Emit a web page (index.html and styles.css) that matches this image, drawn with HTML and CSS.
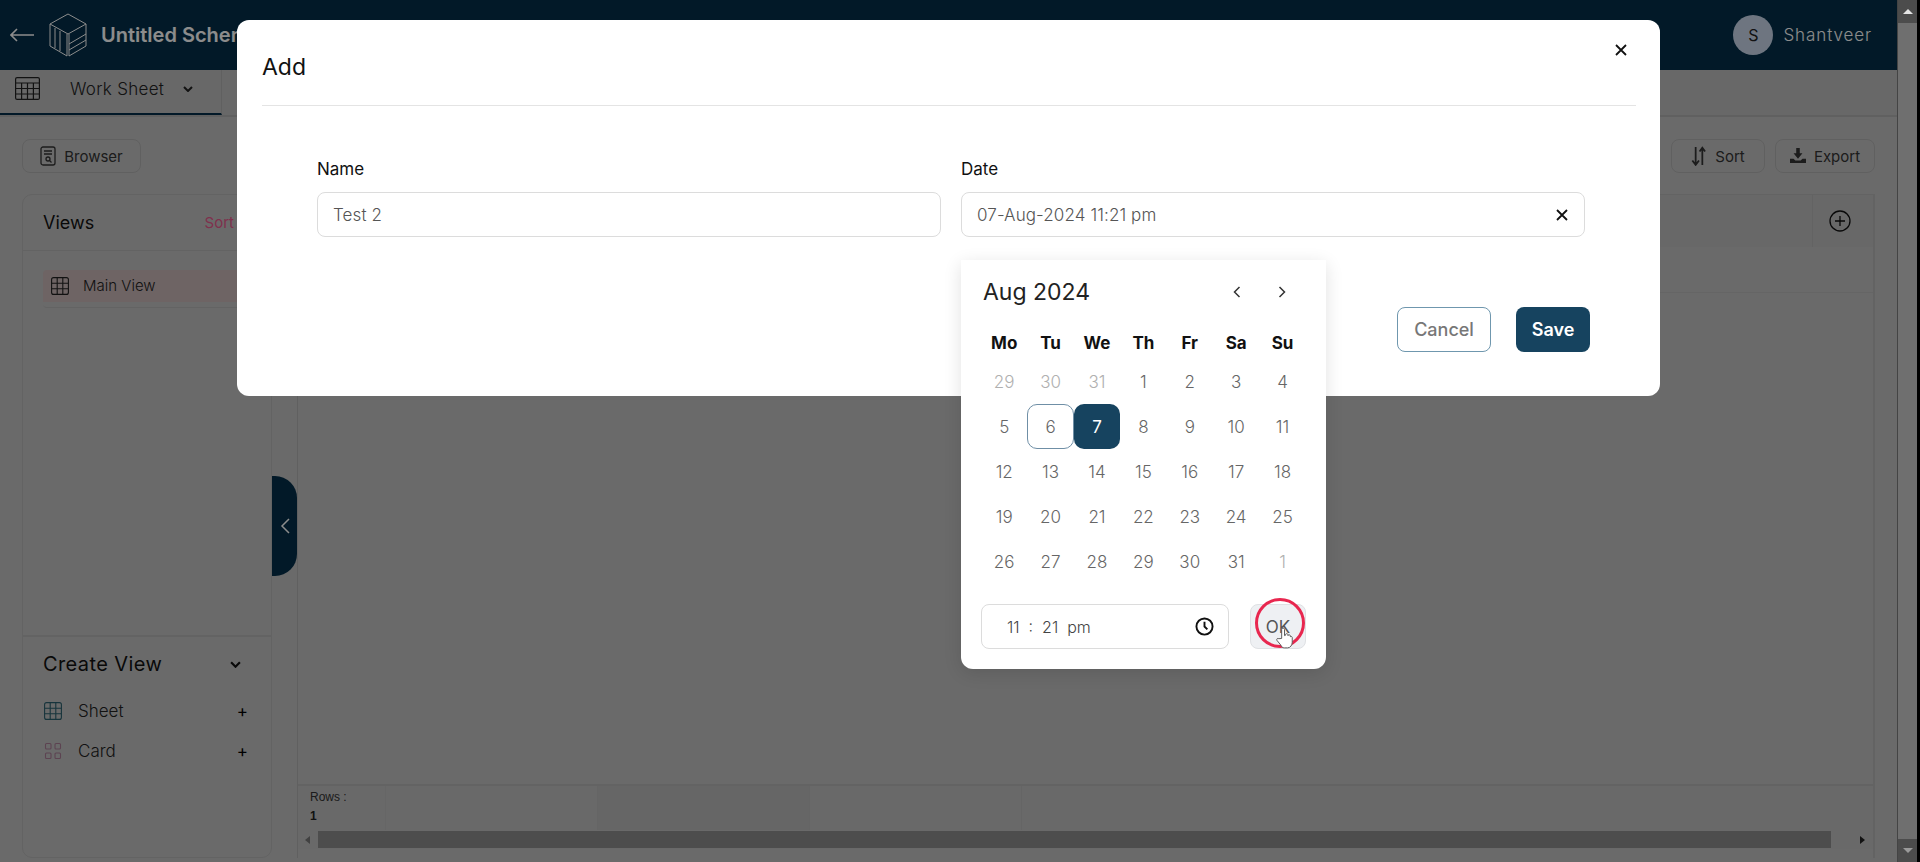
FILE: index.html
```html
<!DOCTYPE html>
<html lang="en">
<head>
  <meta charset="UTF-8">
  <title>Untitled Schema</title>
  <link rel="stylesheet" href="styles.css">
</head>
<body>
  <div class="frame">
    <header class="topbar">
      <svg class="back-icon" viewBox="0 0 24 14" fill="none" stroke="currentColor" stroke-width="1.6"><path d="M24 7H1M7 1 1 7l6 6"/></svg>
      <svg class="logo" viewBox="0 0 40 44" fill="none" stroke="currentColor" stroke-width="1"><path d="M20 1 38 11 20 21 2 11Z"/><path d="M2 11V33L19 43V21"/><path d="M38 11V33L21 43V21"/><path d="M7 15V35M12 18V38M21 31 38 21M21 37 38 27"/></svg>
      <span class="app-title">Untitled Schema</span>
      <div class="user">
        <span class="avatar">S</span>
        <span class="user-name">Shantveer</span>
      </div>
    </header>

    <nav class="tabs">
      <div class="tab active">
        <svg class="tab-icon" viewBox="0 0 25 23" fill="none" stroke="currentColor" stroke-width="1.2"><rect x=".6" y=".6" width="23.8" height="21.8" rx="1.5"/><path d="M.6 6h23.8M.6 11.5h23.8M.6 17h23.8M6.6 6v16.4M12.5 6v16.4M18.4 6v16.4"/></svg>
        <span>Work Sheet</span>
        <svg class="chevron" viewBox="0 0 10 6" fill="none" stroke="currentColor" stroke-width="2"><path d="m1 1 4 4 4-4"/></svg>
      </div>
    </nav>

    <main class="workspace">
      <div class="toolbar">
        <button class="tool-btn browser">
          <svg viewBox="0 0 16 20" fill="none" stroke="currentColor" stroke-width="1.3"><rect x="1" y="1" width="14" height="18" rx="2"/><path d="M4 5h8M4 8h8"/><circle cx="8" cy="13" r="2"/><path d="m9.5 14.5 2 2"/></svg>
          Browser
        </button>
        <div class="tool-group">
          <button class="tool-btn sort">
            <svg viewBox="0 0 14 18" fill="none" stroke="currentColor" stroke-width="1.6"><path d="M4 1v15M1 13l3 4 3-4M10 17V2M7.500 5 10 1.500 12.500 5"/></svg>
            Sort
          </button>
          <button class="tool-btn export">
            <svg viewBox="0 0 18 18" fill="currentColor"><path d="M7 0h4v6h3l-5 6-5-6h3z"/><path d="M0 12h4l2 2h6l2-2h4v5H0z"/></svg>
            Export
          </button>
        </div>
      </div>

      <div class="panels">
        <aside class="sidebar">
          <div class="views-head">
            <span class="views-title">Views</span>
            <span class="views-sort">Sort</span>
          </div>
          <div class="views-list">
            <div class="view-item">
              <svg class="grid-icon" viewBox="0 0 18 18" fill="none" stroke="currentColor" stroke-width="1.1"><rect x=".6" y=".6" width="16.800" height="16.800" rx="2"/><path d="M.6 6.200h16.800M.6 11.800h16.800M6.200.6v16.800M11.800.6v16.800"/></svg>
              Main View
            </div>
          </div>
          <div class="create">
            <div class="create-head">
              <span>Create View</span>
              <svg class="chevron" viewBox="0 0 10 6" fill="none" stroke="currentColor" stroke-width="2"><path d="m1 1 4 4 4-4"/></svg>
            </div>
            <div class="create-item">
              <svg class="grid-icon teal" viewBox="0 0 18 18" fill="none" stroke="currentColor" stroke-width="1.1"><rect x=".6" y=".6" width="16.800" height="16.800" rx="2"/><path d="M.6 6.200h16.800M.6 11.800h16.800M6.200.6v16.800M11.800.6v16.800"/></svg>
              <span class="create-name">Sheet</span>
              <span class="plus">+</span>
            </div>
            <div class="create-item">
              <svg class="grid-icon mauve" viewBox="0 0 18 18" fill="none" stroke="currentColor" stroke-width="1.1"><rect x="1.500" y="1.500" width="5.500" height="5.500" rx="1"/><rect x="11" y="1.500" width="5.500" height="5.500" rx="1"/><rect x="1.500" y="11" width="5.500" height="5.500" rx="1"/><rect x="11" y="11" width="5.500" height="5.500" rx="1"/></svg>
              <span class="create-name">Card</span>
              <span class="plus">+</span>
            </div>
          </div>
        </aside>

        <div class="gutter">
          <div class="collapse">
            <svg viewBox="0 0 10 16" fill="none" stroke="currentColor" stroke-width="1.500"><path d="M9 1 2 8l7 7"/></svg>
          </div>
        </div>

        <section class="sheet">
          <div class="sheet-head">
            <div class="add-col">
              <svg viewBox="0 0 22 22" fill="none" stroke="currentColor" stroke-width="1.300"><circle cx="11" cy="11" r="10"/><path d="M11 6v10M6 11h10"/></svg>
            </div>
          </div>
          <div class="sheet-row"></div>
          <div class="sheet-body"></div>
          <div class="sheet-foot">
            <div class="foot-cell first">
              <span class="foot-label">Rows :</span>
              <b>1</b>
            </div>
            <div class="foot-cell"></div>
            <div class="foot-cell shade"></div>
            <div class="foot-cell"></div>
          </div>
          <div class="h-scroll">
            <span class="arrow-left"></span>
            <div class="h-thumb"></div>
            <span class="arrow-right"></span>
          </div>
        </section>
      </div>
    </main>

    <!-- dialog -->
    <div class="overlay">
      <div class="modal">
        <div class="modal-head">
          <h2>Add</h2>
          <svg class="close" viewBox="0 0 12 12" fill="none" stroke="currentColor" stroke-width="1.800"><path d="m1 1 10 10M11 1 1 11"/></svg>
        </div>
        <div class="form-row">
          <div class="form-group">
            <label>Name</label>
            <div class="field">Test 2</div>
          </div>
          <div class="form-group date-group">
            <label>Date</label>
            <div class="field">
              07-Aug-2024 11:21 pm
              <svg class="clear" viewBox="0 0 12 12" fill="none" stroke="currentColor" stroke-width="1.800"><path d="m1 1 10 10M11 1 1 11"/></svg>
            </div>

            <div class="calendar">
              <div class="cal-head">
                <span class="cal-title">Aug 2024</span>
                <svg class="cal-nav prev" viewBox="0 0 8 12" fill="none" stroke="currentColor" stroke-width="1.500"><path d="M6.500 1 1.500 6l5 5"/></svg>
                <svg class="cal-nav" viewBox="0 0 8 12" fill="none" stroke="currentColor" stroke-width="1.500"><path d="m1.500 1 5 5-5 5"/></svg>
              </div>
              <div class="cal-grid">
                <span class="dow">Mo</span><span class="dow">Tu</span><span class="dow">We</span><span class="dow">Th</span><span class="dow">Fr</span><span class="dow">Sa</span><span class="dow">Su</span>
                <span class="day out">29</span><span class="day out">30</span><span class="day out">31</span><span class="day">1</span><span class="day">2</span><span class="day">3</span><span class="day">4</span>
                <span class="day">5</span><span class="day today">6</span><span class="day selected">7</span><span class="day">8</span><span class="day">9</span><span class="day">10</span><span class="day">11</span>
                <span class="day">12</span><span class="day">13</span><span class="day">14</span><span class="day">15</span><span class="day">16</span><span class="day">17</span><span class="day">18</span>
                <span class="day">19</span><span class="day">20</span><span class="day">21</span><span class="day">22</span><span class="day">23</span><span class="day">24</span><span class="day">25</span>
                <span class="day">26</span><span class="day">27</span><span class="day">28</span><span class="day">29</span><span class="day">30</span><span class="day">31</span><span class="day out">1</span>
              </div>
              <div class="cal-foot">
                <div class="time-field">
                  <span class="time-text">11 &nbsp;:&nbsp; 21 &nbsp;pm</span>
                  <svg viewBox="0 0 20 20" fill="none" stroke="currentColor" stroke-width="2"><circle cx="10" cy="10" r="8.500"/><path d="M10 5v5l3 3"/></svg>
                </div>
                <button class="ok-btn">OK</button>
                <span class="click-ring"></span>
                <svg class="hand" viewBox="0 0 18 24" fill="#fff" stroke="#555" stroke-width="1"><path d="M6 13V3.500a1.500 1.500 0 0 1 3 0V10l1-.3V9a1.400 1.400 0 0 1 2.700 0v1a1.300 1.300 0 0 1 2.500.2v1a1.200 1.200 0 0 1 2 .800V17c0 3-2 6-5 6H9c-2 0-3-1-4-3l-4-5c-.8-1.200.8-2.800 2-1.700z"/></svg>
              </div>
            </div>
          </div>
        </div>
        <div class="modal-actions">
          <button class="btn-cancel">Cancel</button>
          <button class="btn-save">Save</button>
        </div>
      </div>
    </div>
  </div>

  <div class="page-scroll">
    <span class="page-btn"><i class="up"></i></span>
    <span class="page-track"></span>
    <span class="page-btn"><i class="down"></i></span>
  </div>
</body>
</html>
```

FILE: styles.css
```css
/* Reset e estilos gerais */
* {
  box-sizing: border-box;
}
body {
  margin: 0;
  height: 862px;
  overflow: hidden;
  display: flex;
  background: #000;
  font-family: "Inter", "Noto Sans", sans-serif;
  color: #222;
}
button {
  font-family: inherit;
}
.frame {
  position: relative;
  width: 1897px;
  height: 862px;
  display: flex;
  flex-direction: column;
  background: #c2c2c2;
}

/* Top bar */
.topbar {
  height: 70px;
  flex: none;
  display: flex;
  align-items: center;
  padding: 0 25px 0 10px;
  background: #042f49;
  color: #fff;
}
.back-icon {
  width: 24px;
  height: 14px;
}
.logo {
  width: 40px;
  height: 44px;
  margin-left: 14px;
}
.app-title {
  margin-left: 13px;
  font-size: 20px;
  font-weight: 600;
}
.user {
  margin-left: auto;
  display: flex;
  align-items: center;
  gap: 10px;
}
.avatar {
  width: 40px;
  height: 40px;
  border-radius: 50%;
  display: flex;
  align-items: center;
  justify-content: center;
  background: #c8d6ea;
  color: #222;
  font-size: 16px;
}
.user-name {
  font-size: 17px;
  font-weight: 300;
  letter-spacing: 0.9px;
}

/* Tabs */
.tabs {
  height: 47px;
  flex: none;
  display: flex;
  background: #bdbdbd;
  border-bottom: 2px solid #b0b0b0;
}
.tab {
  width: 222px;
  height: 45px;
  display: flex;
  align-items: center;
  padding-left: 15px;
  padding-bottom: 6px;
  font-size: 17px;
  font-weight: 300;
  letter-spacing: 0.3px;
  color: #222;
  border-right: 1px solid #b0b0b0;
}
.tab.active {
  border-bottom: 2px solid #042f49;
}
.tab-icon {
  width: 25px;
  height: 23px;
  margin-right: 30px;
}
.chevron {
  width: 10px;
  height: 6px;
}
.tab .chevron {
  margin-left: 19px;
}

/* Toolbar */
.workspace {
  flex: 1;
  min-height: 0;
  display: flex;
  flex-direction: column;
  padding: 0 22px 4px;
}
.toolbar {
  height: 77px;
  flex: none;
  display: flex;
  align-items: flex-start;
  justify-content: space-between;
  padding-top: 22px;
}
.tool-group {
  display: flex;
  gap: 10px;
}
.tool-btn {
  height: 34px;
  display: flex;
  align-items: center;
  justify-content: center;
  gap: 8px;
  background: transparent;
  border: 1px solid #b0b0b0;
  border-radius: 8px;
  font-size: 15px;
  color: #333;
  padding: 0;
}
.tool-btn svg {
  width: 16px;
  height: 20px;
}
.browser {
  width: 119px;
}
.sort {
  width: 94px;
}
.export {
  width: 100px;
}

/* Sidebar */
.panels {
  flex: 1;
  min-height: 0;
  display: flex;
}
.sidebar {
  width: 250px;
  flex: none;
  display: flex;
  flex-direction: column;
  border: 1px solid #b4b4b4;
  border-radius: 10px;
}
.views-head {
  height: 56px;
  flex: none;
  display: flex;
  align-items: center;
  justify-content: space-between;
  padding: 0 37px 0 20px;
  border-bottom: 1px solid #b4b4b4;
}
.views-title {
  font-size: 18px;
  color: #111;
}
.views-sort {
  font-size: 15px;
  color: #e7588c;
}
.views-list {
  flex: 1;
  padding: 19px 20px 0;
}
.view-item {
  height: 38px;
  padding: 0 8px 6px;
  display: flex;
  align-items: center;
  gap: 14px;
  font-size: 15px;
  font-weight: 300;
  color: #222;
  background: linear-gradient(#c8b6b6, #c8b6b6) no-repeat top / 100% 32px;
  border-bottom: 1px solid #b4b4b4;
  border-radius: 4px;
}
.grid-icon {
  width: 18px;
  height: 18px;
  flex: none;
}
.grid-icon.teal {
  color: #2a5f6d;
}
.grid-icon.mauve {
  color: #a87a94;
}
.create {
  height: 222px;
  flex: none;
  padding: 0 0 0 20px;
  border-top: 2px solid #b4b4b4;
}
.create-head {
  height: 54px;
  display: flex;
  align-items: center;
  justify-content: space-between;
  padding-right: 30px;
  font-size: 20px;
  letter-spacing: 0.4px;
  color: #111;
}
.create-head .chevron {
  width: 11px;
  height: 7px;
}
.create-item {
  height: 40px;
  display: flex;
  align-items: center;
  margin-left: 1px;
  font-size: 17px;
  font-weight: 300;
  color: #222;
}
.create-item:first-of-type {
  margin-top: 6px;
}
.create-name {
  margin-left: 16px;
}
.plus {
  margin-left: auto;
  margin-right: 23px;
  font-size: 17px;
  font-weight: 400;
  color: #000;
}

/* Collapse handle */
.gutter {
  width: 26px;
  flex: none;
  display: flex;
  align-items: center;
  border-right: 1px solid #b0b0b0;
}
.collapse {
  width: 25px;
  height: 100px;
  display: flex;
  align-items: center;
  justify-content: center;
  background: #042f49;
  color: #fff;
  border-radius: 0 22px 22px 0;
}
.collapse svg {
  width: 10px;
  height: 16px;
}

/* Sheet */
.sheet {
  flex: 1;
  display: flex;
  flex-direction: column;
  border-top: 1px solid #b4b4b4;
  border-right: 2px solid #b4b4b4;
}
.sheet-head {
  height: 52px;
  flex: none;
  display: flex;
  justify-content: flex-end;
  background: #bdbdbd;
}
.add-col {
  width: 61px;
  padding-right: 7px;
  display: flex;
  align-items: center;
  justify-content: center;
  border-left: 1px solid #b4b4b4;
}
.add-col svg {
  width: 22px;
  height: 22px;
  color: #111;
}
.sheet-row {
  height: 46px;
  flex: none;
  border-bottom: 1px solid #b8b8b8;
}
.sheet-body {
  flex: 1;
}
.sheet-foot {
  height: 46px;
  flex: none;
  display: flex;
  background: #bfbfbf;
  border-top: 2px solid #b4b4b4;
}
.foot-cell {
  width: 212px;
  border-right: 1px solid #b8b8b8;
}
.foot-cell.first {
  width: 88px;
  padding: 4px 0 0 12px;
  display: flex;
  flex-direction: column;
  gap: 5px;
  font-family: "Liberation Sans", sans-serif;
  font-size: 12px;
  color: #222;
  border-right-color: #bbb;
}
.foot-cell.shade {
  background: #bababa;
}
.foot-label {
  color: #333;
}
.h-scroll {
  height: 19px;
  flex: none;
  margin-bottom: 9px;
  display: flex;
  align-items: center;
  background: #bfbfbf;
}
.h-thumb {
  height: 17px;
  width: 1513px;
  margin-left: 8px;
  background: #8c8c8c;
}
.arrow-left {
  width: 0;
  height: 0;
  margin-left: 7px;
  border: 4px solid transparent;
  border-left: 0;
  border-right: 5px solid #777;
}
.arrow-right {
  width: 0;
  height: 0;
  margin-left: 29px;
  border: 4px solid transparent;
  border-right: 0;
  border-left: 5px solid #222;
}

/* Overlay e modal */
.overlay {
  position: absolute;
  inset: 0;
  display: flex;
  justify-content: center;
  align-items: flex-start;
  padding-top: 20px;
  background: rgba(0, 0, 0, 0.45);
}
.modal {
  width: 1423px;
  height: 376px;
  padding: 0 24px 0 25px;
  background: #fff;
  border-radius: 12px;
}
.modal-head {
  height: 86px;
  display: flex;
  align-items: center;
  justify-content: space-between;
  padding: 0 9px 0 0;
  border-bottom: 1px solid #e4e4e4;
}
.modal-head h2 {
  margin: 8px 0 0;
  font-size: 23px;
  font-weight: 400;
  color: #111;
}
.close {
  width: 12px;
  height: 12px;
  margin: 0 0 25px;
  color: #111;
}
.form-row {
  display: flex;
  gap: 20px;
  padding: 50px 51px 0 55px;
}
.form-group {
  flex: 1;
}
.date-group {
  position: relative;
}
.form-group label {
  display: block;
  height: 21px;
  margin-bottom: 15px;
  font-size: 17px;
  font-weight: 400;
  line-height: 26px;
  color: #111;
}
.field {
  height: 45px;
  display: flex;
  align-items: center;
  justify-content: space-between;
  padding: 0 15px;
  border: 1px solid #dcdcdc;
  border-radius: 8px;
  font-size: 17px;
  font-weight: 300;
  letter-spacing: 0.1px;
  color: #555;
}
.clear {
  width: 12px;
  height: 12px;
  margin-right: 1px;
  color: #111;
}
.modal-actions {
  display: flex;
  justify-content: flex-end;
  gap: 25px;
  padding: 70px 46px 0 0;
}
.btn-cancel,
.btn-save {
  height: 45px;
  border-radius: 8px;
  font-size: 18px;
  font-weight: 500;
}
.btn-cancel {
  width: 94px;
  background: #fff;
  border: 1.500px solid #6f97ae;
  color: #777;
}
.btn-save {
  width: 74px;
  background: #16435f;
  border: none;
  color: #fff;
  font-weight: 600;
}

/* Calendario */
.calendar {
  position: absolute;
  top: 104px;
  left: 0;
  width: 365px;
  height: 409px;
  padding: 0 21px 0 20px;
  background: #fff;
  border-radius: 0 0 12px 12px;
  box-shadow: 0 4px 18px rgba(0, 0, 0, 0.12);
}
.cal-head {
  height: 64px;
  display: flex;
  align-items: center;
  padding: 0 0 0 2px;
}
.cal-title {
  flex: 1;
  font-size: 23px;
  font-weight: 400;
  color: #222;
}
.cal-nav {
  width: 8px;
  height: 12px;
  margin-right: 19px;
  color: #333;
}
.cal-nav.prev {
  margin-right: 37px;
}
.cal-grid {
  display: grid;
  grid-template-columns: repeat(7, 46.400px);
  grid-template-rows: 33px repeat(5, 45px);
  margin-top: 2px;
  height: 258px;
}
.dow,
.day {
  display: flex;
  align-items: center;
  justify-content: center;
}
.dow {
  font-size: 17px;
  font-weight: 700;
  color: #111;
}
.day {
  font-size: 17px;
  font-weight: 300;
  color: #666;
}
.day.out {
  color: #b0b0b0;
}
.day.today {
  border: 1.500px solid #6f8fa6;
  border-radius: 10px;
}
.day.selected {
  background: #16435f;
  border-radius: 10px;
  color: #fff;
  font-weight: 400;
}
.cal-foot {
  position: relative;
  display: flex;
  justify-content: space-between;
  margin-top: 20px;
}
.time-field {
  width: 248px;
  height: 45px;
  display: flex;
  align-items: center;
  justify-content: space-between;
  padding: 0 14px 0 25px;
  border: 1px solid #dcdcdc;
  border-radius: 8px;
}
.time-text {
  font-size: 16px;
  font-weight: 300;
  color: #444;
}
.time-field svg {
  width: 19px;
  height: 19px;
  color: #111;
}
.ok-btn {
  width: 56px;
  height: 45px;
  margin-right: -1px;
  padding: 0;
  background: #eef0f3;
  border: 1px solid #dfe1e4;
  border-radius: 8px;
  font-size: 17px;
  color: #555;
}
.click-ring {
  position: absolute;
  left: 274px;
  top: -6px;
  width: 50px;
  height: 50px;
  border: 3px solid #e8274f;
  border-radius: 50%;
}
.hand {
  position: absolute;
  left: 295px;
  top: 22px;
  width: 17px;
  height: 23px;
}

/* Barra de rolagem da janela */
.page-scroll {
  width: 20px;
  height: 862px;
  flex: none;
  display: flex;
  flex-direction: column;
  background: #6b6b6b;
  border-left: 1px solid #444;
}
.page-btn {
  height: 23px;
  flex: none;
  display: flex;
  align-items: center;
  justify-content: center;
  background: #4c4c4c;
}
.page-track {
  flex: 1;
  background: #6f6f6f;
}
.page-btn i {
  width: 0;
  height: 0;
  border: 5px solid transparent;
}
.page-btn .up {
  border-top: 0;
  border-bottom: 5px solid #e4e4e4;
}
.page-btn .down {
  border-bottom: 0;
  border-top: 5px solid #9a9a9a;
}
```
